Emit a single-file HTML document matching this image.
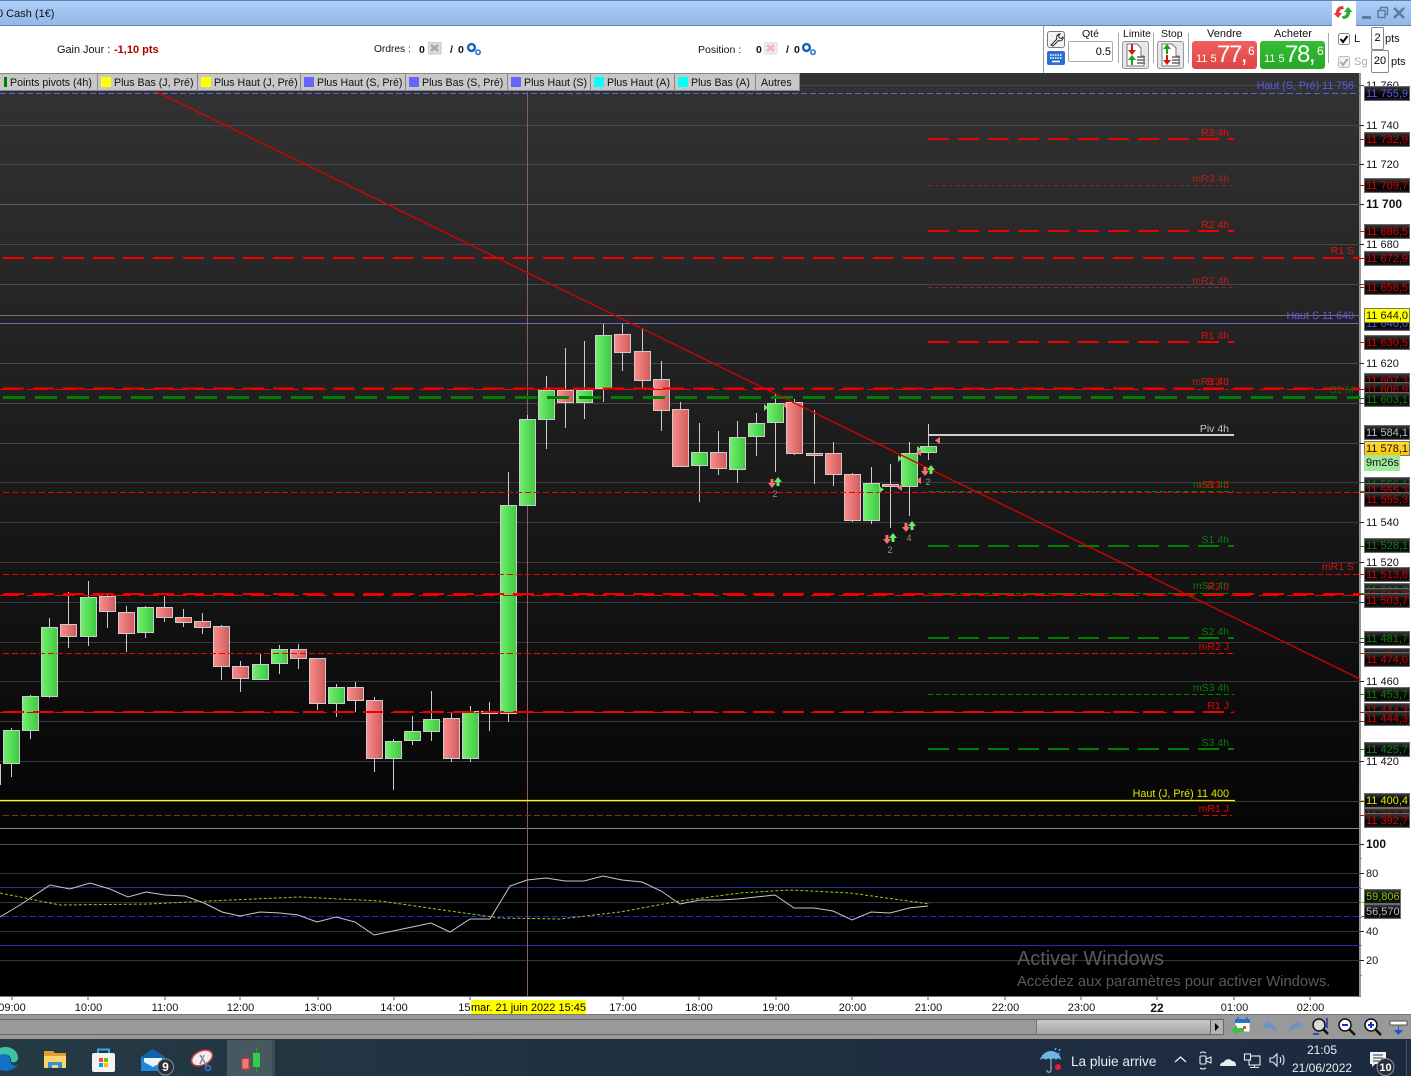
<!DOCTYPE html>
<html lang="fr"><head><meta charset="utf-8"><title>Cash</title>
<style>
html,body{margin:0;padding:0;width:1411px;height:1076px;overflow:hidden;background:#fff;font-family:"Liberation Sans",Arial,sans-serif;font-size:11px;color:#000}
#p{position:relative;width:1411px;height:1076px;overflow:hidden}
.a{position:absolute;white-space:nowrap}
.tab{position:absolute;top:73px;height:16px;background:#c8c8c8;border:1px solid #888;border-left:0;line-height:18px;white-space:nowrap;overflow:hidden;font-size:10.6px;color:#111}
.sw{position:absolute;top:3px;width:10px;height:10px}
.t{position:absolute;left:1364px;width:46px;height:15px;box-sizing:border-box;border:1px solid #6a6a6a;background:linear-gradient(#3a3a3a,#141414 30%,#000 70%,#1c1c1c);line-height:15px;padding-left:1px;font-size:11px;overflow:hidden;white-space:nowrap;color:#dc0000}
.gr{color:#0d800d}.y{color:#e6e600}.b{color:#5a5af0}.w{color:#bbc}
.ax{position:absolute;left:1366px;margin-top:1px;font-size:11px;line-height:13px;color:#111;white-space:nowrap}
.x{position:absolute;top:1002px;font-size:11px;line-height:13px;transform:translateX(-50%);color:#111;white-space:nowrap}
.l{font-size:10.5px;line-height:12px;position:absolute;white-space:nowrap;text-align:right}
.lb{position:absolute;margin-top:1px;font-size:10.5px;line-height:12px;white-space:nowrap;color:#111}
</style></head><body><div id="p">

<!-- title bar -->
<div class="a" style="left:0;top:0;width:1411px;background:linear-gradient(#acd0f8,#93b8e6);border-top:1px solid #5a7fb5;border-bottom:1px solid #5e80ae;box-sizing:border-box;height:26px"></div>
<div class="a" style="left:-3px;top:7px;font-size:11px;line-height:14px;color:#111">0 Cash (1€)</div>
<div class="a" style="left:1332px;top:1px;width:24px;height:26px;background:#fff"></div>
<svg class="a" style="left:1333px;top:3px" width="22" height="20" viewBox="0 0 22 20"><path d="M10 3 C6 3 3 5 3 10 L0.5 10 L5 15 L9 10 L6.5 10 C6.5 7 8 6 11 6Z" fill="#e63b3b"/><path d="M10 16 C14 16 17 14 17 9 L19.5 9 L15 4 L11 9 L13.5 9 C13.5 12 12 13 9 13Z" fill="#1eae2d"/></svg>
<svg class="a" style="left:1360px;top:5px" width="48" height="16" viewBox="0 0 48 16"><rect x="2" y="11" width="9" height="3" fill="#5b7c9e"/><path d="M18 5.500h7v7h-7zM20.500 5.500v-3h7v7h-2.500" fill="none" stroke="#5b7c9e" stroke-width="1.500"/><path d="M34 3l10 10M44 3L34 13" stroke="#5b7c9e" stroke-width="2.600"/></svg>

<!-- info row -->
<div class="lb" style="left:57px;top:43px;font-size:10.9px">Gain Jour :</div>
<div class="lb" style="left:114px;top:43px;color:#b00000;font-weight:bold;font-size:11px">-1,10 pts</div>
<div class="lb" style="left:374px;top:43px;font-size:10.2px">Ordres :</div>
<div class="lb" style="left:419px;top:43px;font-weight:bold">0</div>
<svg class="a" style="left:428px;top:42px" width="14" height="13"><rect width="13" height="12" fill="#dcdcdc" stroke="#c4c4c4"/><path d="M3 3l7 6M10 3l-7 6" stroke="#a5a5a5" stroke-width="2.400"/></svg>
<div class="lb" style="left:450px;top:43px;font-weight:bold">/</div>
<div class="lb" style="left:458px;top:43px;font-weight:bold">0</div>
<svg class="a" style="left:466px;top:42px" width="16" height="14"><circle cx="5.500" cy="5.500" r="3.400" fill="none" stroke="#1560bd" stroke-width="2.400"/><circle cx="12" cy="10.200" r="2.200" fill="none" stroke="#2a78d0" stroke-width="1.600"/></svg>
<div class="lb" style="left:698px;top:43px">Position :</div>
<div class="lb" style="left:756px;top:43px;font-weight:bold">0</div>
<svg class="a" style="left:764px;top:42px" width="14" height="13"><rect width="13" height="12" fill="#e8eef4" stroke="#d8e0e8"/><path d="M3 3l7 6M10 3l-7 6" stroke="#f8b4b4" stroke-width="2.600"/></svg>
<div class="lb" style="left:786px;top:43px;font-weight:bold">/</div>
<div class="lb" style="left:794px;top:43px;font-weight:bold">0</div>
<svg class="a" style="left:801px;top:42px" width="16" height="14"><circle cx="5.500" cy="5.500" r="3.400" fill="none" stroke="#1560bd" stroke-width="2.400"/><circle cx="12" cy="10.200" r="2.200" fill="none" stroke="#2a78d0" stroke-width="1.600"/></svg>

<!-- order panel -->
<div class="a" style="left:1043px;top:26px;width:1px;height:47px;background:#999"></div>
<svg class="a" style="left:1047px;top:31px" width="19" height="18"><rect x=".5" y=".5" width="17" height="16" rx="2.500" fill="#f4f4f4" stroke="#777"/><path d="M4 14l6-6c-1-2 0-5 3-5l-1.500 2 1 2 2 .5 1.500-1.500c.5 3-2 4.500-4.500 3.500l-5.500 5.500z" fill="#fff" stroke="#222"/></svg>
<svg class="a" style="left:1047px;top:51px" width="18" height="14"><rect width="18" height="14" rx="2" fill="#2d6fd0"/><path d="M3 4h12M3 7h12" stroke="#fff" stroke-width="1.500" stroke-dasharray="1.500 1"/><path d="M5 10.500h8" stroke="#fff" stroke-width="1.500"/></svg>
<div class="lb" style="left:1082px;top:27px;">Qté</div>
<div class="a" style="left:1068px;top:41px;width:45px;height:21px;box-sizing:border-box;border:1px solid #aaa;border-radius:2px;text-align:right;line-height:20px;padding-right:1px;font-size:11px">0.5</div>
<div class="a" style="left:1118px;top:33px;width:1px;height:30px;background:#aaa"></div>
<div class="a" style="left:1153px;top:33px;width:1px;height:30px;background:#aaa"></div>
<div class="a" style="left:1188px;top:33px;width:1px;height:30px;background:#aaa"></div>
<div class="a" style="left:1328px;top:33px;width:1px;height:30px;background:#aaa"></div>
<div class="lb" style="left:1123px;top:27px">Limite</div>
<div class="lb" style="left:1161px;top:27px">Stop</div>
<svg class="a" style="left:1122px;top:41px" width="28" height="28"><rect x=".5" y=".5" width="26" height="27" rx="2" fill="#e8e8e8" stroke="#999"/><path d="M5 3h10l4 4v8h3v10H5z" fill="#fff" stroke="#777"/><path d="M9 3v6H6l4 5 4-5h-3V3z" fill="#d01818"/><path d="M10 14l-4 5h3v5h2v-5h3z" fill="#19a319"/><path d="M15 16h8M15 19h8M15 22h8" stroke="#666" stroke-width="1.500"/></svg>
<svg class="a" style="left:1157px;top:41px" width="28" height="28"><rect x=".5" y=".5" width="26" height="27" rx="2" fill="#e8e8e8" stroke="#999"/><path d="M5 3h10l4 4v8h3v10H5z" fill="#fff" stroke="#777"/><path d="M10 3l-4 5h3v5h2V8h3z" fill="#19a319"/><path d="M9 14v5H6l4 5 4-5h-3v-5z" fill="#d01818"/><path d="M15 16h8M15 19h8M15 22h8" stroke="#666" stroke-width="1.500"/></svg>
<div class="lb" style="left:1207px;top:27px;font-size:11px">Vendre</div>
<div class="lb" style="left:1274px;top:27px;font-size:11px">Acheter</div>
<div class="a" style="left:1192px;top:41px;width:65px;height:28px;border-radius:3px;background:linear-gradient(#f06060,#e04444);color:#fff;overflow:hidden">
<span class="a" style="left:4px;top:11px;font-size:11px;line-height:14px">11 5</span><span class="a" style="left:25px;top:2px;font-size:24px;line-height:24px;letter-spacing:-1.400px">77,</span><span class="a" style="left:56px;top:3px;font-size:12px;line-height:14px">6</span></div>
<div class="a" style="left:1260px;top:41px;width:65px;height:28px;border-radius:3px;background:linear-gradient(#35bd35,#27a827);color:#fff;overflow:hidden">
<span class="a" style="left:4px;top:11px;font-size:11px;line-height:14px">11 5</span><span class="a" style="left:25px;top:2px;font-size:24px;line-height:24px;letter-spacing:-1.400px">78,</span><span class="a" style="left:57px;top:3px;font-size:12px;line-height:14px">6</span></div>
<svg class="a" style="left:1338px;top:33px" width="13" height="13"><rect x=".5" y=".5" width="11" height="11" rx="2" fill="#fff" stroke="#888"/><path d="M2.500 6l2.500 3 4.500-6" fill="none" stroke="#000" stroke-width="2"/></svg>
<div class="lb" style="left:1354px;top:32px;font-size:11px">L</div>
<div class="a" style="left:1371px;top:27px;width:11px;height:21px;border:1px solid #888;border-radius:2px;text-align:center;line-height:21px">2</div>
<div class="lb" style="left:1385px;top:32px;font-size:11px">pts</div>
<svg class="a" style="left:1338px;top:56px" width="13" height="13"><rect x=".5" y=".5" width="11" height="11" rx="2" fill="#f2f2f2" stroke="#bbb"/><path d="M2.500 6l2.500 3 4.500-6" fill="none" stroke="#aaa" stroke-width="2"/></svg>
<div class="lb" style="left:1354px;top:55px;color:#aaa;font-size:11px">Sg</div>
<div class="a" style="left:1371px;top:50px;width:16px;height:21px;border:1px solid #888;border-radius:2px;text-align:center;line-height:21px">20</div>
<div class="lb" style="left:1391px;top:55px;font-size:11px">pts</div>

<!-- chart background -->
<div class="a" style="left:0;top:73px;width:1359px;height:755px;background:linear-gradient(#333,#050505)"></div>
<div class="a" style="left:0;top:828px;width:1359px;height:168px;background:#000"></div>
<div class="a" style="left:1359px;top:73px;width:2px;height:924px;background:#999"></div>
<div class="a" style="left:0;top:996px;width:1361px;height:1px;background:#777"></div>

<svg class="a" style="left:0;top:0" width="1364" height="1000" viewBox="0 0 1364 1000">
<defs>
<linearGradient id="gg"><stop offset="0" stop-color="#70f070"/><stop offset="1" stop-color="#40c840"/></linearGradient>
<linearGradient id="gr"><stop offset="0" stop-color="#fc8c8c"/><stop offset="1" stop-color="#ce5c5c"/></linearGradient>
</defs>
<!-- grid -->
<path stroke="#47474c" stroke-width="1" fill="none" d="M0 85.500H1364M0 125.500H1364M0 164.500H1364M0 244.500H1364M0 284.500H1364M0 363.500H1364M0 403.500H1364M0 443.500H1364"/>
<path stroke="#3a3a3e" stroke-width="1" fill="none" d="M0 482.500H1364M0 522.500H1364M0 562.500H1364M0 602.500H1364M0 642.500H1364M0 681.500H1364M0 721.500H1364M0 761.500H1364M0 801.500H1364"/>
<path stroke="#5c5c64" d="M0 204.500H1364"/>
<path stroke="#8a8a8a" d="M0 828.500H1360"/>
<path stroke="#4c4c54" d="M0 844.500H1364"/>
<path stroke="#333338" d="M0 873.500H1364M0 902.500H1364M0 931.500H1364M0 960.500H1364"/>
<path stroke="#2a2aa8" d="M0 887.500H1360M0 945.500H1360"/>
<path stroke="#2424e8" stroke-dasharray="6 3" d="M3 916.500H1364"/>
<!-- crosshair -->
<path stroke="#86605f" d="M527.500 92V996"/>
<!-- wicks -->
<path stroke="#ccc" fill="none" d="M.5 764V785M11.500 728V777M30.500 695V739M49.500 618V698M68.500 592V648M88.500 581V646M107.500 595V628M126.500 606V652M145.500 606V638M164.500 596V622M183.500 609V627M202.500 613V634M221.500 625V680M240.500 661V692M260.500 654V680M279.500 645V674M298.500 644V669M317.500 658V710M336.500 684V717M355.500 682V712M374.500 697V772M393.500 739V790M412.500 716V745M431.500 691V741M451.500 713V762M470.500 706V762M489.500 702V731M508.500 472V722M527.500 415V506M546.500 376V449M565.500 348V428M584.500 341V419M603.500 324V402M622.500 324V371M642.500 328V388M661.500 361V431M680.500 402V467M699.500 423V502M718.500 431V475M737.500 421V483M756.500 413V456M775.500 394V472M794.500 399V455M814.500 410V484M833.500 442V486M852.500 473V522M871.500 467V524M890.500 464V528M909.500 442V516M928.500 424V460"/>
<!-- bodies -->
<g stroke="#ccc" stroke-width="1">
<rect fill="url(#gg)" x="3.500" y="730.500" width="16" height="33"/>
<rect fill="url(#gg)" x="22.500" y="696.500" width="16" height="34"/>
<rect fill="url(#gg)" x="41.500" y="627.500" width="16" height="69"/>
<rect fill="url(#gr)" x="60.500" y="624.500" width="16" height="12"/>
<rect fill="url(#gg)" x="80.500" y="597.500" width="16" height="39"/>
<rect fill="url(#gr)" x="99.500" y="596.500" width="16" height="15"/>
<rect fill="url(#gr)" x="118.500" y="612.500" width="16" height="21"/>
<rect fill="url(#gg)" x="137.500" y="607.500" width="16" height="25"/>
<rect fill="url(#gr)" x="156.500" y="607.500" width="16" height="10"/>
<rect fill="url(#gr)" x="175.500" y="617.500" width="16" height="5"/>
<rect fill="url(#gr)" x="194.500" y="621.500" width="16" height="6"/>
<rect fill="url(#gr)" x="213.500" y="626.500" width="16" height="40"/>
<rect fill="url(#gr)" x="232.500" y="666.500" width="16" height="12"/>
<rect fill="url(#gg)" x="252.500" y="664.500" width="16" height="15"/>
<rect fill="url(#gg)" x="271.500" y="649.500" width="16" height="14"/>
<rect fill="url(#gr)" x="290.500" y="649.500" width="16" height="9"/>
<rect fill="url(#gr)" x="309.500" y="658.500" width="16" height="45"/>
<rect fill="url(#gg)" x="328.500" y="687.500" width="16" height="16"/>
<rect fill="url(#gr)" x="347.500" y="687.500" width="16" height="13"/>
<rect fill="url(#gr)" x="366.500" y="700.500" width="16" height="58"/>
<rect fill="url(#gg)" x="385.500" y="741.500" width="16" height="17"/>
<rect fill="url(#gg)" x="404.500" y="731.500" width="16" height="9"/>
<rect fill="url(#gg)" x="423.500" y="719.500" width="16" height="12"/>
<rect fill="url(#gr)" x="443.500" y="718.500" width="16" height="40"/>
<rect fill="url(#gg)" x="462.500" y="711.500" width="16" height="47"/>
<rect fill="url(#gr)" x="481.500" y="711.500" width="16" height="2"/>
<rect fill="url(#gg)" x="500.500" y="505.500" width="16" height="208"/>
<rect fill="url(#gg)" x="519.500" y="419.500" width="16" height="86"/>
<rect fill="url(#gg)" x="538.500" y="390.500" width="16" height="29"/>
<rect fill="url(#gr)" x="557.500" y="390.500" width="16" height="12"/>
<rect fill="url(#gg)" x="576.500" y="390.500" width="16" height="12"/>
<rect fill="url(#gg)" x="595.500" y="335.500" width="16" height="53"/>
<rect fill="url(#gr)" x="614.500" y="334.500" width="16" height="18"/>
<rect fill="url(#gr)" x="634.500" y="351.500" width="16" height="29"/>
<rect fill="url(#gr)" x="653.500" y="379.500" width="16" height="31"/>
<rect fill="url(#gr)" x="672.500" y="409.500" width="16" height="57"/>
<rect fill="url(#gg)" x="691.500" y="452.500" width="16" height="13"/>
<rect fill="url(#gr)" x="710.500" y="452.500" width="16" height="16"/>
<rect fill="url(#gg)" x="729.500" y="437.500" width="16" height="32"/>
<rect fill="url(#gg)" x="748.500" y="423.500" width="16" height="13"/>
<rect fill="url(#gg)" x="767.500" y="403.500" width="16" height="19"/>
<rect fill="url(#gr)" x="786.500" y="402.500" width="16" height="51"/>
<rect fill="url(#gr)" x="806.500" y="453.500" width="16" height="2"/>
<rect fill="url(#gr)" x="825.500" y="453.500" width="16" height="21"/>
<rect fill="url(#gr)" x="844.500" y="474.500" width="16" height="46"/>
<rect fill="url(#gg)" x="863.500" y="483.500" width="16" height="37"/>
<rect fill="url(#gr)" x="882.500" y="484.500" width="16" height="2"/>
<rect fill="url(#gg)" x="901.500" y="453.500" width="16" height="33"/>
<rect fill="url(#gg)" x="920.500" y="446.500" width="16" height="6"/>
</g>
<!-- full width levels -->
<path stroke="#6060e8" stroke-dasharray="6 3" d="M0 93.500H1360"/>
<path stroke="#6868d8" d="M0 323.500H1360"/>
<path stroke="#8a6a6a" d="M0 315.500H1360"/>
<path stroke="#f00000" stroke-width="2" stroke-dasharray="21 9" d="M3 258H1360"/>
<g stroke="#f00000" fill="none">
<path stroke-width="2" stroke-dasharray="21 9" d="M3 388.500H1360M3 594H1360M3 712H1234"/>
<path stroke-dasharray="20 8" d="M-1 389.500H1360M-1 595.500H1360M-1 712.500H1234"/>
<path stroke-dasharray="6 3" d="M3 492.500H1360M3 574.500H1360M3 653.500H1234"/>
</g>
<path stroke="#008000" stroke-width="3" stroke-dasharray="22 10" d="M3 397.500H1360"/>
<path stroke="#ffff00" stroke-width="1.200" d="M0 800.500H1235"/>
<path stroke="#7c2a2a" stroke-dasharray="6 3" d="M3 815.500H1200"/>
<path stroke="#f00000" stroke-dasharray="6 3" d="M1203 815.500H1232"/>
<!-- 4h levels -->
<g fill="none">
<path stroke="#f00000" stroke-width="2" stroke-dasharray="21 9" d="M928 139H1234M928 231H1234M928 342H1234"/>
<path stroke="#8c2525" stroke-dasharray="4 3" d="M928 185.500H1234M928 287.500H1234"/>
<path stroke="#f00000" stroke-dasharray="4 3" d="M1190 389.500H1234"/>
<path stroke="#cfcfcf" stroke-width="2" d="M928 435H1234"/>
<path stroke="#008000" stroke-dasharray="5 3" d="M928 491.500H1234M928 593.500H1234M928 694.500H1234"/>
<path stroke="#008000" stroke-width="2" stroke-dasharray="21 9" d="M928 546H1234M928 638H1234M928 749H1234"/>
</g>
<!-- trend -->
<path stroke="#d80000" stroke-width="1.300" d="M153 90L1360 679"/>
<!-- RSI -->
<polyline fill="none" stroke="#c8c8c8" stroke-width="1" points="0,917 20,905 50,885 70,889 90,883 110,889 128,897 146,892 165,895 185,896 204,903 222,912 240,916 260,912 280,913 298,915 317,922 336,917 355,922 374,935 393,931 412,927 431,923 450,932 470,919 490,919 510,886 527,880 546,878 565,881 584,881 603,876 622,880 642,882 661,891 680,904 700,900 720,900 737,899 756,897 775,895 794,908 814,908 833,911 852,920 871,912 890,913 909,908 928,906"/>
<polyline fill="none" stroke="#8fcf20" stroke-dasharray="3 2" points="0,893 60,905 150,904 230,900 300,897 380,901 450,911 500,918 560,919 620,912 680,901 740,893 790,890 850,893 930,904"/>
<!-- small markers -->
<g fill="#66ee66"><path d="M764 404v7l4-3.500zM898 455v7l4-3.500zM917 446v6l4-3zM879 486v7l5-3.500z"/>
<path d="M778 477l-4 5h2.500v4h3v-4H782zM893 533l-4 5h2.500v4h3v-4H897zM912 521l-4 5h2.500v4h3v-4H916zM931 465l-4 5h2.500v4h3v-4H935z"/></g>
<g fill="#f87070"><path d="M786 402v6l-4-3zM902 484v7l-5-3.500zM921 449v7l-5-3.500zM921 477v7l-5-3.500zM940 437v7l-5-3.500z"/>
<path d="M772 488l-4-5h2.500v-4h3v4H776zM887 544l-4-5h2.500v-4h3v4H891zM906 532l-4-5h2.500v-4h3v4H910zM925 476l-4-5h2.500v-4h3v4H929z"/></g>
<g font-family="Liberation Sans,sans-serif" font-size="9" text-anchor="middle" fill="#8a93a0">
<text x="775" y="497">2</text><text x="890" y="553">2</text><text x="909" y="541" fill="#a08a60">4</text><text x="928" y="485">2</text></g>
<!-- axis ticks -->
<path stroke="#222" d="M1360 125.500h4M1360 164.500h4M1360 204.500h4M1360 244.500h4M1360 363.500h4M1360 443.500h4M1360 522.500h4M1360 562.500h4M1360 681.500h4M1360 761.500h4M1360 844.500h4M1360 873.500h4M1360 931.500h4M1360 960.500h4"/>
<path stroke="#888" d="M1360 858.500h2M1360 888.500h2M1360 917.500h2M1360 945.500h2M1360 975.500h2"/>
<path stroke="#e00000" d="M1360 139.500h4M1360 185.500h4M1360 231.500h4M1360 258.500h4M1360 287.500h4M1360 342.500h4M1360 389.500h4M1360 492.500h4M1360 574.500h4M1360 594.500h4M1360 653.500h4M1360 712.500h4M1360 815.500h4"/>
<path stroke="#0a8a0a" d="M1360 398.500h4M1360 491.500h4M1360 546.500h4M1360 593.500h4M1360 638.500h4M1360 694.500h4M1360 749.500h4"/>
<path stroke="#d8d800" d="M1360 800.500h4"/><path stroke="#80d000" d="M1360 902.500h4"/>
</svg>

<!-- level labels -->
<div class="l" style="right:182px;top:127px;color:#e01010">R3 4h</div>
<div class="l" style="right:182px;top:173px;color:#b02020">mR3 4h</div>
<div class="l" style="right:182px;top:219px;color:#e01010">R2 4h</div>
<div class="l" style="right:182px;top:275px;color:#b02020">mR2 4h</div>
<div class="l" style="right:182px;top:330px;color:#e01010">R1 4h</div>
<div class="l" style="right:182px;top:376px;color:#b02020">mR1 4h</div>
<div class="l" style="right:182px;top:376px;color:#e80000">R3 J</div>
<div class="l" style="right:182px;top:423px;color:#c4c4c4">Piv 4h</div>
<div class="l" style="right:182px;top:479px;color:#0a7a0a">mS1 4h</div>
<div class="l" style="right:182px;top:479px;color:#e80000">mR3 J</div>
<div class="l" style="right:182px;top:534px;color:#0a7a0a">S1 4h</div>
<div class="l" style="right:182px;top:580px;color:#0a7a0a">mS2 4h</div>
<div class="l" style="right:182px;top:581px;color:#e80000">R2 J</div>
<div class="l" style="right:182px;top:626px;color:#0a7a0a">S2 4h</div>
<div class="l" style="right:182px;top:641px;color:#e80000">mR2 J</div>
<div class="l" style="right:182px;top:682px;color:#0a7a0a">mS3 4h</div>
<div class="l" style="right:182px;top:700px;color:#e80000">R1 J</div>
<div class="l" style="right:182px;top:737px;color:#0a7a0a">S3 4h</div>
<div class="l" style="right:182px;top:788px;color:#e6e600;font-size:10.8px">Haut (J, Pré) 11 400</div>
<div class="l" style="right:182px;top:803px;color:#e80000">mR1 J</div>
<div class="l" style="right:57px;top:245px;color:#e01010">R1 S</div>
<div class="l" style="right:57px;top:561px;color:#e01010">mR1 S</div>
<div class="l" style="right:57px;top:384px;color:#0a6a0a">S1 M</div>
<div class="l" style="right:57px;top:310px;color:#5a5ae8;font-size:10.7px">Haut S 11 640</div>
<div class="l" style="right:57px;top:80px;color:#5a5ae8;font-size:10.7px">Haut (S, Pré) 11 756</div>

<!-- legend -->
<div class="tab" style="left:0;width:97px"><span class="sw" style="left:4px;width:3px;background:#008000"></span><span class="a" style="left:10px">Points pivots (4h)</span></div>
<div class="tab" style="left:98px;width:99px"><span class="sw" style="left:3px;background:#ff0"></span><span class="a" style="left:16px">Plus Bas (J, Pré)</span></div>
<div class="tab" style="left:198px;width:102px"><span class="sw" style="left:3px;background:#ff0"></span><span class="a" style="left:16px">Plus Haut (J, Pré)</span></div>
<div class="tab" style="left:301px;width:104px"><span class="sw" style="left:3px;background:#6666ff"></span><span class="a" style="left:16px">Plus Haut (S, Pré)</span></div>
<div class="tab" style="left:406px;width:101px"><span class="sw" style="left:3px;background:#6666ff"></span><span class="a" style="left:16px">Plus Bas (S, Pré)</span></div>
<div class="tab" style="left:508px;width:82px"><span class="sw" style="left:3px;background:#6666ff"></span><span class="a" style="left:16px">Plus Haut (S)</span></div>
<div class="tab" style="left:591px;width:83px"><span class="sw" style="left:3px;background:#0ff"></span><span class="a" style="left:16px">Plus Haut (A)</span></div>
<div class="tab" style="left:675px;width:80px"><span class="sw" style="left:3px;background:#0ff"></span><span class="a" style="left:16px">Plus Bas (A)</span></div>
<div class="tab" style="left:756px;width:43px"><span class="a" style="left:5px">Autres</span></div>

<!-- axis labels -->
<div class="ax" style="top:79px">11 760</div>
<div class="ax" style="top:119px">11 740</div>
<div class="ax" style="top:158px">11 720</div>
<div class="ax" style="top:197px;font-weight:bold;font-size:12px">11 700</div>
<div class="ax" style="top:238px">11 680</div>
<div class="ax" style="top:357px">11 620</div>
<div class="ax" style="top:516px">11 540</div>
<div class="ax" style="top:556px">11 520</div>
<div class="ax" style="top:675px">11 460</div>
<div class="ax" style="top:755px">11 420</div>
<div class="ax" style="top:837px;font-weight:bold;font-size:12px">100</div>
<div class="ax" style="top:867px">80</div>
<div class="ax" style="top:925px">40</div>
<div class="ax" style="top:954px">20</div>

<!-- tags -->
<div class="t b" style="top:86px">11 755,9</div>
<div class="t" style="top:132px">11 732,9</div>
<div class="t" style="top:178px">11 709,7</div>
<div class="t" style="top:224px">11 686,5</div>
<div class="t" style="top:251px">11 672,9</div>
<div class="t" style="top:280px">11 658,5</div>
<div class="t b" style="top:316px">11 640,0</div>
<div class="t" style="top:308px;background:#ffff00;color:#111;border-color:#777">11 644,0</div>
<div class="t" style="top:335px">11 630,5</div>
<div class="t" style="top:373px">11 607,3</div>
<div class="t" style="top:382px">11 606,9</div>
<div class="t gr" style="top:392px">11 603,1</div>
<div class="t w" style="top:425px">11 584,1</div>
<div class="t" style="top:441px;background:linear-gradient(#ffd83a,#ffc400);color:#111;border-color:#777">11 578,1</div>
<div class="t" style="top:455px;width:36px;height:16px;background:#9ee99e;color:#111;border-color:#9ee99e;line-height:15px">9m26s</div>
<div class="t gr" style="top:477px">11 556,1</div>
<div class="t" style="top:483px">11 555,3</div>
<div class="t" style="top:492px">11 555,3</div>
<div class="t gr" style="top:538px">11 528,1</div>
<div class="t" style="top:567px">11 513,8</div>
<div class="t gr" style="top:583px">11 503,7</div>
<div class="t" style="top:588px">11 503,7</div>
<div class="t" style="top:593px">11 503,7</div>
<div class="t gr" style="top:631px">11 481,7</div>
<div class="t" style="top:648px">11 474,0</div>
<div class="t" style="top:652px">11 474,0</div>
<div class="t gr" style="top:687px">11 453,7</div>
<div class="t" style="top:703px">11 444,3</div>
<div class="t" style="top:711px">11 444,3</div>
<div class="t gr" style="top:742px">11 425,7</div>
<div class="t y" style="top:793px">11 400,4</div>
<div class="t" style="top:808px">11 392,7</div>
<div class="t" style="top:813px">11 392,7</div>
<div class="t" style="top:889px;width:37px;color:#80d000">59,806</div>
<div class="t w" style="top:904px;width:37px">56,570</div>

<!-- watermark -->
<div class="a" style="left:1017px;top:948px;font-size:19.900px;line-height:22px;color:#5a5a5a">Activer Windows</div>
<div class="a" style="left:1017px;top:973px;font-size:14.800px;line-height:18px;color:#5a5a5a">Accédez aux paramètres pour activer Windows.</div>

<!-- x axis -->
<svg class="a" style="left:0;top:997px" width="1360" height="5"><path stroke="#555" d="M12 0v3M88 0v3M165 0v3M240 0v3M318 0v3M394 0v3M470 0v3M623 0v3M699 0v3M776 0v3M852 0v3M928 0v3M1005 0v3M1081 0v3M1157 0v3M1234 0v3M1310 0v3"/></svg>
<div class="x" style="left:12px">09:00</div><div class="x" style="left:88.500px">10:00</div><div class="x" style="left:165px">11:00</div><div class="x" style="left:240.500px">12:00</div><div class="x" style="left:318px">13:00</div><div class="x" style="left:394px">14:00</div><div class="x" style="left:472px">15:00</div><div class="x" style="left:623px">17:00</div><div class="x" style="left:699px">18:00</div><div class="x" style="left:776px">19:00</div><div class="x" style="left:852.500px">20:00</div><div class="x" style="left:928.500px">21:00</div><div class="x" style="left:1005.500px">22:00</div><div class="x" style="left:1081.500px">23:00</div><div class="x" style="left:1157px;font-weight:bold;font-size:12px">22</div><div class="x" style="left:1234.500px">01:00</div><div class="x" style="left:1310.500px">02:00</div>
<div class="a" style="left:471px;top:1000px;width:115px;height:14px;background:#ffff00;font-size:11px;line-height:16px;text-align:center;overflow:hidden">mar. 21 juin 2022 15:45</div>

<!-- toolbar -->
<div class="a" style="left:0;top:1014px;width:1411px;height:25px;background:#999;border-top:1px solid #777;box-sizing:border-box"></div>
<div class="a" style="left:0;top:1019px;width:1224px;height:1px;background:#666"></div>
<div class="a" style="left:0;top:1034px;width:1224px;height:1px;background:#666"></div>
<div class="a" style="left:1036px;top:1020px;width:174px;height:14px;background:linear-gradient(#c8c8c8,#a6a6a6);border-left:1px solid #777"></div>
<div class="a" style="left:1210px;top:1020px;width:14px;height:14px;background:#b4b4b4;border-left:1px solid #666;border-right:1px solid #666;box-sizing:border-box"></div>
<svg class="a" style="left:1214px;top:1023px" width="6" height="8"><path d="M1 0l4 4-4 4z"/></svg>
<svg class="a" style="left:1230px;top:1017px" width="180" height="21" viewBox="0 0 180 21">
<rect x="5" y="2" width="15" height="13" fill="#fff" stroke="#999"/><rect x="5" y="2" width="15" height="4" fill="#2a6fc9"/><path d="M8 0v4M17 0v4" stroke="#2a6fc9" stroke-width="1.500"/><rect x="13" y="9" width="3" height="3" fill="#e44"/><path d="M1 13l6-5v3h7v4H7v3z" fill="#3cc03c"/>
<path d="M32 8l6-5v3c6 0 9 4 8 11-1-4-4-6-8-6v2z" fill="#6f94c0"/>
<path d="M73 8l-6-5v3c-6 0-9 4-8 11 1-4 4-6 8-6v2z" fill="#6f94c0"/>
<circle cx="89" cy="8" r="6" fill="#d8d8d8" stroke="#111" stroke-width="1.500"/><path d="M93 12l5 5" stroke="#111" stroke-width="2.500"/><path d="M97 1v10M89 17h-6" stroke="#1530d0" stroke-width="1.500"/>
<circle cx="115" cy="8" r="6" fill="#fff" stroke="#111" stroke-width="1.500"/><path d="M119 12l6 6" stroke="#111" stroke-width="2.500"/><path d="M112 8h6" stroke="#1530d0" stroke-width="2"/>
<circle cx="141" cy="8" r="6" fill="#fff" stroke="#111" stroke-width="1.500"/><path d="M145 12l6 6" stroke="#111" stroke-width="2.500"/><path d="M138 8h6M141 5v6" stroke="#1530d0" stroke-width="2"/>
<rect x="160" y="4" width="17" height="4" fill="#fff" stroke="#555"/><path d="M168.500 9v5M165 13.500h7l-3.500 3.500z" stroke="#1b55d8" fill="#1b55d8"/>
</svg>

<!-- taskbar -->
<div class="a" style="left:0;top:1039px;width:1411px;height:37px;background:linear-gradient(90deg,#243a44,#1f3040 50%,#1c2a40)"></div>
<div class="a" style="left:227px;top:1040px;width:45px;height:36px;background:#465860"></div>
<div class="a" style="left:272px;top:1040px;width:3px;height:36px;background:#3c4c54"></div>
<div class="a" style="left:1406px;top:1040px;width:1px;height:36px;background:#4a5868"></div>
<svg class="a" style="left:0;top:1040px" width="275" height="36" viewBox="0 0 275 36">
<path d="M0 8C8 5 18 9 18 18c0 4-4 5-7 4 1-7-5-9-11-7z" fill="#3cc4a0"/><path d="M0 15c6-2 11 1 10 6 1 4 5 6 8 3-3 6-10 8-18 6z" fill="#1270c8"/>
<path d="M44 19V11h9l2 2h11v6z" fill="#e0a030"/><rect x="44" y="16" width="22" height="12" fill="#fad66a"/><path d="M48 28v-6h14v6h-4v-3h-6v3z" fill="#3b8ed8"/>
<rect x="92" y="13" width="23" height="19" rx="2" fill="#f2f2f2"/><path d="M98 13V9.500h11V13" fill="none" stroke="#30a8e0" stroke-width="2"/><rect x="99" y="18" width="4" height="4" fill="#f25022"/><rect x="104" y="18" width="4" height="4" fill="#7fba00"/><rect x="99" y="23" width="4" height="4" fill="#00a4ef"/><rect x="104" y="23" width="4" height="4" fill="#ffb900"/>
<path d="M141 17l12-8 12 8v14h-24z" fill="#1f88d8"/><path d="M141 17l12 8 12-8-12-8z" fill="#0f62ab"/><path d="M144 18h18v4l-9 5-9-5z" fill="#e8f4fb"/>
<circle cx="165.500" cy="27" r="8" fill="#2a2f35" stroke="#8a9096"/><text x="165.500" y="31" text-anchor="middle" font-size="12" font-weight="bold" fill="#fff" font-family="Liberation Sans,sans-serif">9</text>
<ellipse cx="202" cy="18" rx="11" ry="7" transform="rotate(-25 202 18)" fill="#eee" stroke="#c94040" stroke-width="1.500"/><path d="M200 15l7 11M204 15l-4 9" stroke="#889" stroke-width="1.500"/><circle cx="208" cy="28" r="2.500" fill="none" stroke="#2a80d8" stroke-width="1.500"/>
<path d="M245.500 15v17" stroke="#c03a3a"/><rect x="242" y="18.500" width="7" height="10.500" fill="#ee7a7a" stroke="#c03a3a"/><path d="M256.500 7v25" stroke="#1fa01f"/><rect x="253" y="13" width="7" height="14" fill="#33cc44"/>
</svg>
<svg class="a" style="left:1038px;top:1046px" width="26" height="30" viewBox="0 0 26 30"><path d="M2 14C4 7 10 5 13 5c5 0 10 4 10 9-2-2-4-2-5 0-1-2-3-2-5 0-2-2-4-2-5 0-2-2-4-2-6 0z" fill="#69b8e8"/><path d="M13 14v10c0 3-4 3-4 0" fill="none" stroke="#8a97a2" stroke-width="1.500"/><circle cx="20" cy="21" r="3" fill="#e0203a"/><path d="M18 2l-1 2M22 3l-1 2M21 7l-1 2" stroke="#69b8e8" stroke-width="1.300"/></svg>
<div class="a" style="left:1071px;top:1053px;font-size:13.600px;line-height:17px;color:#e8edf2">La pluie arrive</div>
<svg class="a" style="left:1172px;top:1048px" width="120" height="26" viewBox="0 0 120 26"><path d="M3 14l5.500-5 5.500 5" fill="none" stroke="#e8edf2" stroke-width="1.300"/>
<g fill="none" stroke="#e8edf2" stroke-width="1.100"><rect x="28" y="8" width="6" height="8" rx="1"/><path d="M34 11l5-2v6l-5-2z"/><path d="M28 5q3-2 6 0M28 20q3 2 6 0"/></g>
<path d="M48 18c0-3 3-4 4-4 1-3 6-4 8-1 3 0 4 2 4 5z" fill="#e8edf2"/>
<g fill="none" stroke="#e8edf2" stroke-width="1.100"><rect x="77" y="8" width="11" height="9"/><path d="M82.500 17v2.500M78 19.500h9"/><rect x="72.500" y="6" width="6" height="6" fill="#1d2c40"/></g>
<g fill="none" stroke="#e8edf2" stroke-width="1.100"><path d="M98 10h3l4-4v12l-4-4h-3z"/><path d="M108 9q1.500 3 0 6M110.500 7q3 5 0 10"/></g></svg>
<div class="a" style="left:1292px;top:1043px;width:60px;text-align:center;font-size:12px;line-height:15px;color:#e8edf2">21:05</div>
<div class="a" style="left:1292px;top:1061px;width:60px;text-align:center;font-size:12px;line-height:15px;color:#e8edf2">21/06/2022</div>
<svg class="a" style="left:1368px;top:1050px" width="28" height="26" viewBox="0 0 28 26"><path d="M2 2h16v12H7l-3 3v-3H2z" fill="#f0f3f6"/><path d="M5 5h10M5 8h10M5 11h7" stroke="#334" stroke-width="1"/><circle cx="17.500" cy="17" r="8.500" fill="#2a2f35" stroke="#8a9096"/><text x="17.500" y="21" text-anchor="middle" font-size="11" font-weight="bold" fill="#fff" font-family="Liberation Sans,sans-serif">10</text></svg>

</div></body></html>
